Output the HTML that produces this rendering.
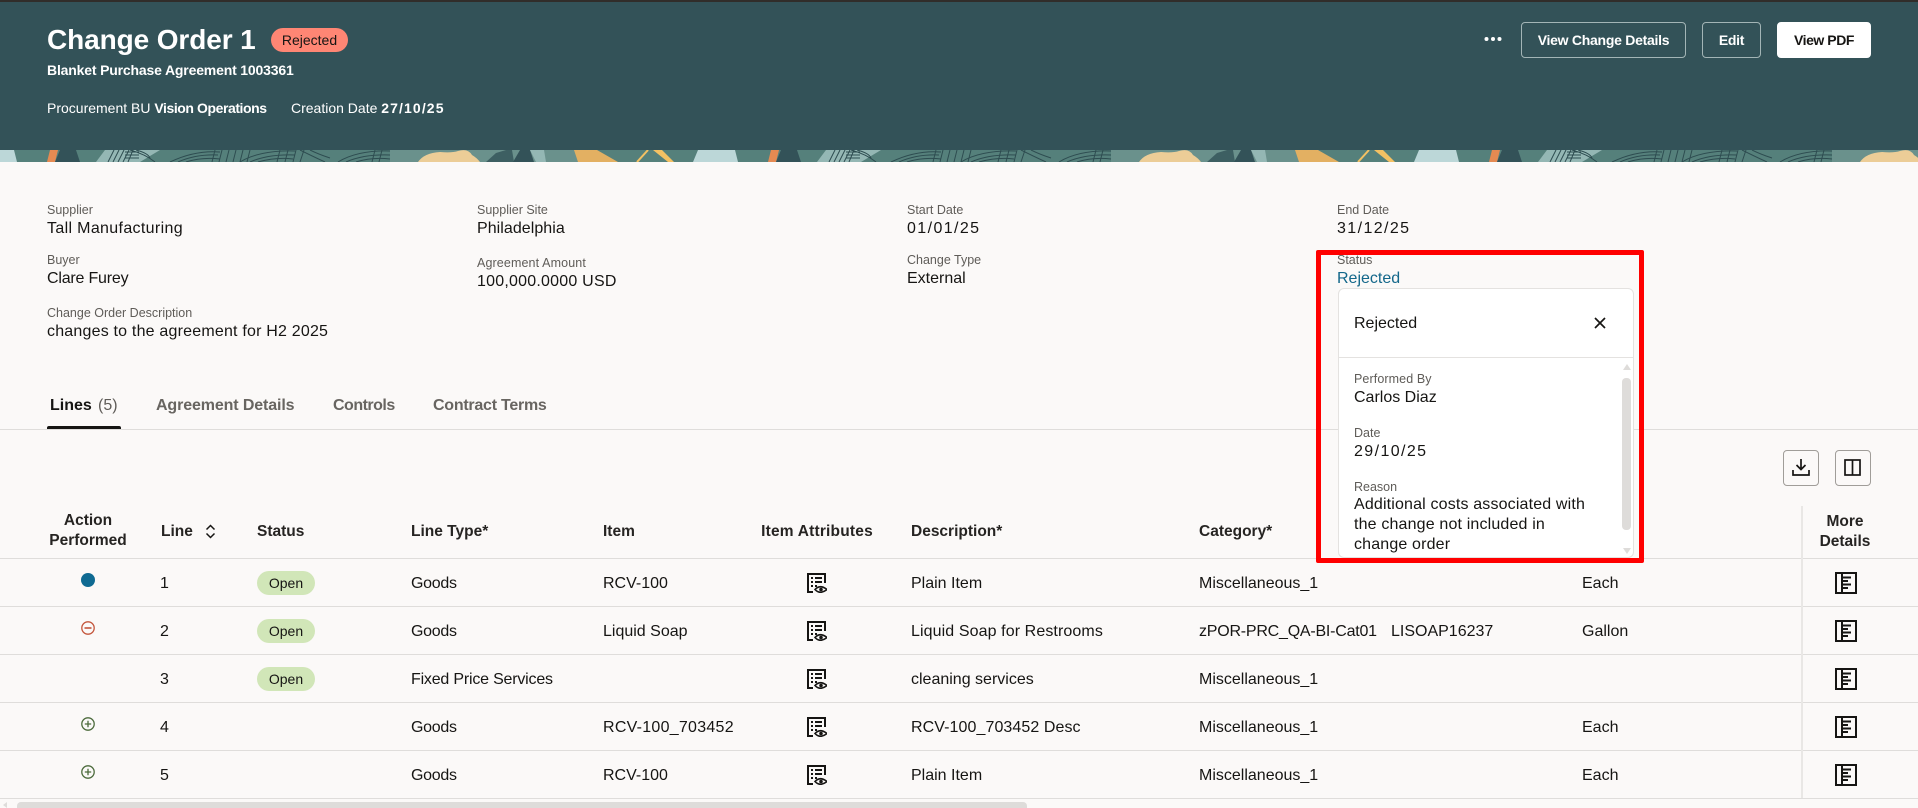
<!DOCTYPE html>
<html lang="en"><head><meta charset="utf-8"><title>Change Order 1</title>
<style>
html,body{margin:0;padding:0;width:1918px;height:808px;overflow:hidden;background:#fbf9f8;font-family:"Liberation Sans",sans-serif;color:#161513}
.t{position:absolute;white-space:nowrap;line-height:20px;font-size:16px}
.l{font-size:12.5px;color:#5f5c58}
.v{font-size:16px;color:#161513}
.r{margin-top:.5px}
.h{font-size:15.5px;font-weight:bold;color:#262422}
.c{transform:translateX(-50%);text-align:center}
.w{color:#fff}
.btn{position:absolute;top:22px;height:36px;box-sizing:border-box;border:1px solid #a3b5b6;border-radius:4px;color:#fff;font-weight:bold;font-size:14px;line-height:34px;text-align:center;letter-spacing:-.27px}
.row{position:absolute;left:0;width:1918px;height:1px;background:#dfdddb}
.badge{position:absolute;left:257px;width:58px;height:24px;border-radius:12px;background:#d1e6b8;font-size:14px;line-height:24px;text-align:center}
svg{position:absolute;overflow:visible}
.tab{color:#686561;font-size:16px;font-weight:bold;letter-spacing:-.12px}
</style></head><body>
<svg width="0" height="0" style="position:absolute"><defs>
<symbol id="attr" viewBox="0 0 20 20"><path d="M6 19H1V1h17v9" fill="none" stroke="#161513" stroke-width="2"/><path d="M4 5h2M8 5h7M4 9h2M8 9h7M4 13h2M8 13h2" stroke="#161513" stroke-width="2"/><path d="M8 16.500q5-5.500 12 0q-7 5.500-12 0z" fill="none" stroke="#161513" stroke-width="1.600"/><circle cx="14" cy="16.500" r="1.800" fill="#161513"/></symbol>
<symbol id="more" viewBox="0 0 22 22"><rect x="1" y="1" width="20" height="20" fill="none" stroke="#161513" stroke-width="2"/><path d="M7 1v20" stroke="#161513" stroke-width="2"/><path d="M7 5.500h9M7 9h6M7 12.500h9M7 16h6" stroke="#161513" stroke-width="2"/></symbol>
<symbol id="plus" viewBox="0 0 14 14"><circle cx="7" cy="7" r="6.200" fill="none" stroke="#4c6b3c" stroke-width="1.300"/><path d="M3.800 7h6.400M7 3.800v6.400" stroke="#4c6b3c" stroke-width="1.300"/></symbol>
</defs></svg>

<div style="position:absolute;left:0;top:0;width:1918px;height:2px;background:#312d2a"></div>
<div style="position:absolute;left:0;top:2px;width:1918px;height:148px;background:#335258"></div>
<svg style="left:0;top:150px" width="1918" height="12" viewBox="0 0 1918 12">
<defs><pattern id="p" x="0" y="0" width="721" height="12" patternUnits="userSpaceOnUse">
<rect width="721" height="12" fill="#55807b"/>
<rect x="390" width="205" height="12" fill="#6a918c"/>
<polygon points="0,0 14,0 17,12 0,12" fill="#bcd7d8"/>
<polygon points="50,0 58,0 55,12 47,12" fill="#e58a52"/>
<polygon points="60,0 76,0 80,12 55,12" fill="#335258"/>
<polygon points="105,0 160,0 140,12 96,12" fill="#94b7b4"/>
<g fill="none" stroke="#2d4c50" stroke-width="1">
<path d="M108 12l6-12M113 12l6-12M118 12l6-12M123 12l6-12M128 12l5-12"/>
<path d="M125 2h14M125 5h14M125 8h14"/>
<path d="M130 0q15 4 25 12M136 0q12 3 14 8"/>
<path d="M170 12q25-12 50-10M178 12q18-8 40-7M186 12q16-5 34-3"/>
<path d="M215 0l-3 12M222 0l-3 12M229 0l-3 12M236 0l-3 12M243 0l-3 12M250 0l-3 12"/>
<path d="M240 12q20-12 55-11M250 12q18-8 45-7M258 12q18-5 35-3"/>
<path d="M280 0l-3 12M288 0l-3 12M296 0l-3 12M304 0l-4 12"/>
<path d="M300 0q10 5 25 12M310 0q8 4 20 8"/>
<path d="M338 12q20-12 52-11M346 12q18-8 44-7M356 12q16-5 34-3"/>
<path d="M375 0l-3 12M382 0l-3 12"/>
</g>
<path d="M418 12q6-9 22-10q12 1 18-1q10-3 14 4q5 3 8 7z" fill="#eccd97"/>
<polygon points="486,12 496,3 506,0 512,0 514,12" fill="#3d5f62"/>
<polygon points="513,12 520,0 530,0 534,12" fill="#335258"/>
<polygon points="530,0 544,0 546,12 536,12" fill="#94b7b4"/>
<polygon points="574,0 597,0 618,12 578,12" fill="#e3b062"/>
<path d="M637 12l11-12" stroke="#f4c163" stroke-width="2"/>
<polygon points="653,0 662,0 674,12 668,12" fill="#f4c163"/>
<polygon points="698,0 721,0 721,12 693,12" fill="#bcd7d8"/>
</pattern></defs>
<rect width="1918" height="12" fill="url(#p)"/></svg>

<div class="t w" style="left:47px;top:24px;font-size:28px;line-height:32px;font-weight:bold;letter-spacing:-.1px">Change Order 1</div>
<div style="position:absolute;left:271px;top:28px;width:77px;height:24px;border-radius:12px;background:#ff8674;font-size:14px;line-height:24px;text-align:center">Rejected</div>
<div class="t w" style="left:47px;top:60px;font-size:14px;font-weight:bold;letter-spacing:-.17px">Blanket Purchase Agreement 1003361</div>
<div class="t w" style="left:47px;top:98px;font-size:14px">Procurement BU <b style="letter-spacing:-.43px">Vision Operations</b></div>
<div class="t w" style="left:291px;top:98px;font-size:14px">Creation Date <b style="letter-spacing:1.1px">27/10/25</b></div>

<svg style="left:1484px;top:36px" width="18" height="6"><circle cx="2.500" cy="3" r="2" fill="#fff"/><circle cx="9" cy="3" r="2" fill="#fff"/><circle cx="15.500" cy="3" r="2" fill="#fff"/></svg>
<div class="btn" style="left:1521px;width:165px">View Change Details</div>
<div class="btn" style="left:1702px;width:59px">Edit</div>
<div class="btn" style="left:1777px;width:94px;background:#fff;border-color:#fff;color:#161513;letter-spacing:-.45px">View PDF</div>

<div class="t l" style="left:47px;top:200px">Supplier</div><div class="t v" style="left:47px;top:218.500px;letter-spacing:.34px">Tall Manufacturing</div>
<div class="t l" style="left:477px;top:200px">Supplier Site</div><div class="t v" style="left:477px;top:218.500px;letter-spacing:.05px">Philadelphia</div>
<div class="t l" style="left:907px;top:200px">Start Date</div><div class="t v" style="left:907px;top:218.500px;letter-spacing:1.4px">01/01/25</div>
<div class="t l" style="left:1337px;top:200px">End Date</div><div class="t v" style="left:1337px;top:218.500px;letter-spacing:1.4px">31/12/25</div>
<div class="t l" style="left:47px;top:250px">Buyer</div><div class="t v" style="left:47px;top:268.500px;letter-spacing:-.2px">Clare Furey</div>
<div class="t l" style="left:477px;top:253px;letter-spacing:.12px">Agreement Amount</div><div class="t v" style="left:477px;top:271.500px;letter-spacing:.22px">100,000.0000 USD</div>
<div class="t l" style="left:907px;top:250px">Change Type</div><div class="t v" style="left:907px;top:268.500px">External</div>
<div class="t l" style="left:47px;top:303px">Change Order Description</div><div class="t v" style="left:47px;top:321.500px;letter-spacing:.2px">changes to the agreement for H2 2025</div>

<div class="t" style="left:50px;top:396px;font-size:16px;font-weight:bold">Lines</div>
<div class="t" style="left:98px;top:396px;color:#5f5c58">(5)</div>
<div class="t tab" style="left:156px;top:396px">Agreement Details</div>
<div class="t tab" style="left:333px;top:396px;letter-spacing:-.5px">Controls</div>
<div class="t tab" style="left:433px;top:396px;letter-spacing:-.25px">Contract Terms</div>
<div style="position:absolute;left:47px;top:426px;width:74px;height:3px;background:#161513;border-radius:2px 2px 0 0"></div>
<div class="row" style="top:429px"></div>

<div style="position:absolute;left:1783px;top:450px;width:36px;height:36px;box-sizing:border-box;border:1px solid #a09d99;border-radius:4px"></div>
<svg style="left:1792px;top:459px" width="18" height="18" fill="none" stroke="#161513" stroke-width="1.700"><path d="M9 0v10M4.500 6l4.500 4.500L13.500 6M1 11v5h16v-5"/></svg>
<div style="position:absolute;left:1835px;top:450px;width:36px;height:36px;box-sizing:border-box;border:1px solid #a09d99;border-radius:4px"></div>
<svg style="left:1844px;top:459px" width="18" height="18" fill="none" stroke="#161513" stroke-width="1.700"><rect x="1" y="1" width="15" height="15"/><path d="M8.500 1v15"/></svg>

<div class="t h c" style="left:88px;top:511px">Action</div><div class="t h c" style="left:88px;top:531px">Performed</div>
<div class="t h" style="left:161px;top:522px">Line</div>
<svg style="left:205px;top:524px" width="11" height="15" fill="none" stroke="#161513" stroke-width="1.500"><path d="M1.500 5.500l4-4 4 4M1.500 9.500l4 4 4-4"/></svg>
<div class="t h" style="left:257px;top:522px">Status</div>
<div class="t h" style="left:411px;top:522px">Line Type*</div>
<div class="t h" style="left:603px;top:522px">Item</div>
<div class="t h c" style="left:817px;top:522px;letter-spacing:.2px">Item Attributes</div>
<div class="t h" style="left:911px;top:522px">Description*</div>
<div class="t h" style="left:1199px;top:522px">Category*</div>
<div class="t h c" style="left:1845px;top:512px">More</div><div class="t h c" style="left:1845px;top:532px">Details</div>

<div class="row" style="top:558px"></div><div class="row" style="top:606px"></div><div class="row" style="top:654px"></div><div class="row" style="top:702px"></div><div class="row" style="top:750px"></div><div class="row" style="top:798px"></div>
<div style="position:absolute;left:1801px;top:506px;width:2px;height:292px;background:#e9e7e5"></div>

<div style="position:absolute;left:81px;top:573px;width:14px;height:14px;border-radius:50%;background:#0f6a92"></div>
<svg style="left:81px;top:621px" width="14" height="14"><circle cx="7" cy="7" r="6.200" fill="none" stroke="#c4563c" stroke-width="1.300"/><path d="M3.500 7h7" stroke="#c4563c" stroke-width="1.600"/></svg>
<svg style="left:81px;top:717px" width="14" height="14"><use href="#plus"/></svg>
<svg style="left:81px;top:765px" width="14" height="14"><use href="#plus"/></svg>

<div class="t v r" style="left:160px;top:573px">1</div><div class="t v r" style="left:160px;top:621px">2</div><div class="t v r" style="left:160px;top:669px">3</div><div class="t v r" style="left:160px;top:717px">4</div><div class="t v r" style="left:160px;top:765px">5</div>
<div class="badge" style="top:571px">Open</div><div class="badge" style="top:619px">Open</div><div class="badge" style="top:667px">Open</div>

<div class="t v r" style="left:411px;top:573px;letter-spacing:-.3px">Goods</div><div class="t v r" style="left:411px;top:621px;letter-spacing:-.3px">Goods</div><div class="t v r" style="left:411px;top:669px;letter-spacing:-.2px">Fixed Price Services</div><div class="t v r" style="left:411px;top:717px;letter-spacing:-.3px">Goods</div><div class="t v r" style="left:411px;top:765px;letter-spacing:-.3px">Goods</div>
<div class="t v r" style="left:603px;top:573px">RCV-100</div><div class="t v r" style="left:603px;top:621px">Liquid Soap</div><div class="t v r" style="left:603px;top:717px;letter-spacing:.26px">RCV-100_703452</div><div class="t v r" style="left:603px;top:765px">RCV-100</div>
<svg style="left:807px;top:573px" width="20" height="20"><use href="#attr"/></svg>
<svg style="left:807px;top:621px" width="20" height="20"><use href="#attr"/></svg>
<svg style="left:807px;top:669px" width="20" height="20"><use href="#attr"/></svg>
<svg style="left:807px;top:717px" width="20" height="20"><use href="#attr"/></svg>
<svg style="left:807px;top:765px" width="20" height="20"><use href="#attr"/></svg>
<div class="t v r" style="left:911px;top:573px">Plain Item</div><div class="t v r" style="left:911px;top:621px;letter-spacing:.1px">Liquid Soap for Restrooms</div><div class="t v r" style="left:911px;top:669px">cleaning services</div><div class="t v r" style="left:911px;top:717px;letter-spacing:.08px">RCV-100_703452 Desc</div><div class="t v r" style="left:911px;top:765px">Plain Item</div>
<div class="t v r" style="left:1199px;top:573px">Miscellaneous_1</div><div class="t v r" style="left:1199px;top:621px;letter-spacing:-.22px">zPOR-PRC_QA-BI-Cat01</div><div class="t v r" style="left:1391px;top:621px">LISOAP16237</div><div class="t v r" style="left:1199px;top:669px">Miscellaneous_1</div><div class="t v r" style="left:1199px;top:717px">Miscellaneous_1</div><div class="t v r" style="left:1199px;top:765px">Miscellaneous_1</div>
<div class="t v r" style="left:1582px;top:573px">Each</div><div class="t v r" style="left:1582px;top:621px">Gallon</div><div class="t v r" style="left:1582px;top:717px">Each</div><div class="t v r" style="left:1582px;top:765px">Each</div>
<svg style="left:1835px;top:572px" width="22" height="22"><use href="#more"/></svg>
<svg style="left:1835px;top:620px" width="22" height="22"><use href="#more"/></svg>
<svg style="left:1835px;top:668px" width="22" height="22"><use href="#more"/></svg>
<svg style="left:1835px;top:716px" width="22" height="22"><use href="#more"/></svg>
<svg style="left:1835px;top:764px" width="22" height="22"><use href="#more"/></svg>

<div style="position:absolute;left:1338px;top:288px;width:296px;height:270px;box-sizing:border-box;background:#fff;border:1px solid #e4e2e0;border-radius:6px;overflow:hidden"></div>
<div style="position:absolute;left:1338px;top:357px;width:296px;height:1px;background:#e4e2e0"></div>
<div class="t l" style="left:1337px;top:250px">Status</div>
<div class="t" style="left:1337px;top:268.500px;color:#13678a">Rejected</div>
<div class="t v" style="left:1354px;top:314px">Rejected</div>
<svg style="left:1594px;top:317px" width="12" height="12" stroke="#161513" stroke-width="1.700"><path d="M1 1l10 10M11 1L1 11"/></svg>
<div class="t l" style="left:1354px;top:369px;letter-spacing:.1px">Performed By</div><div class="t v" style="left:1354px;top:388px">Carlos Diaz</div>
<div class="t l" style="left:1354px;top:423px">Date</div><div class="t v" style="left:1354px;top:442px;letter-spacing:1.4px">29/10/25</div>
<div class="t l" style="left:1354px;top:477px">Reason</div>
<div class="t v" style="left:1354px;top:495px;letter-spacing:.16px">Additional costs associated with</div>
<div class="t v" style="left:1354px;top:515px;letter-spacing:.16px">the change not included in</div>
<div class="t v" style="left:1354px;top:535px;letter-spacing:.16px">change order</div>
<svg style="left:1622px;top:363px" width="10" height="8"><path d="M5 1l4 6H1z" fill="#dedcda"/></svg>
<div style="position:absolute;left:1622px;top:378px;width:9px;height:152px;border-radius:4px;background:#dedcda"></div>
<svg style="left:1622px;top:547px" width="10" height="8"><path d="M5 7l4-6H1z" fill="#dedcda"/></svg>
<div style="position:absolute;left:1316px;top:250px;width:328px;height:313px;box-sizing:border-box;border:5px solid #f00;border-radius:2px"></div>

<svg style="left:2px;top:802px" width="8" height="6"><path d="M1 3l4-3v6z" fill="#dedcda"/></svg>
<div style="position:absolute;left:17px;top:802px;width:1010px;height:6px;background:#dedcda;border-radius:4px 4px 0 0"></div>
</body></html>
